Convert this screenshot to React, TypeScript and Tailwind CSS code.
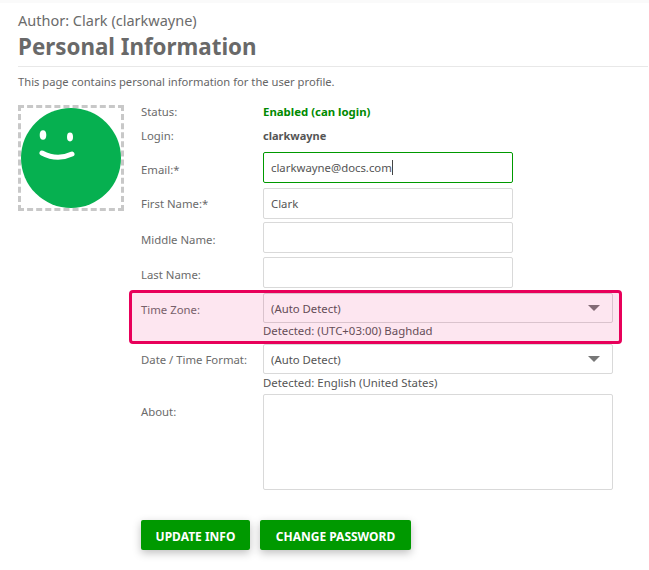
const labelClass = "w-[122px] shrink-0 text-[11.35px] text-[#6b6b6b]";
const boxClass = "rounded-[2px] border bg-white px-[7px] text-[11.35px] leading-[29px] text-[#555]";
const inputClass = `h-[31px] border-[#d9d9d9] ${boxClass}`;
const detectedClass = "ml-[122px] text-[11.4px] leading-[16px] text-[#555]";

function Field({ label, value, mt, labelPad }: { label: string; value?: string; mt: string; labelPad: string }) {
  return (
    <div className={`flex items-center ${mt}`}>
      <div className={`${labelClass} ${labelPad}`}>{label}</div>
      <div className={`${inputClass} w-[250px]`}>{value}</div>
    </div>
  );
}

function SelectBox({ value }: { value: string }) {
  return (
    <div className={`h-[30px] border-[#d9d9d9] ${boxClass} flex w-[350px] items-center justify-between pr-[12px]`}>
      <span>{value}</span>
      <span className="h-0 w-0 border-x-[6px] border-t-[6px] border-x-transparent border-t-[#777]" />
    </div>
  );
}

function Avatar() {
  return (
    <div className="mt-[5px] h-[106px] w-[106px] shrink-0 border-[3px] border-dashed border-[#c8c8c8]">
      <svg viewBox="0 0 100 100" className="h-[100px] w-[100px]">
        <circle cx="50" cy="50" r="50" fill="#06b050" />
        <ellipse cx="22" cy="27" rx="3.3" ry="4.8" fill="#fff" />
        <ellipse cx="49" cy="29" rx="3" ry="4.4" fill="#fff" />
        <path d="M21 45 Q36 53 51 46" fill="none" stroke="#fff" strokeWidth="5" strokeLinecap="round" />
      </svg>
    </div>
  );
}

export default function App() {
  return (
    <div className="h-[570px] w-[649px] overflow-hidden bg-white font-['Noto_Sans',sans-serif]">
      <div className="h-[3px] bg-[#fafafa]" />
      <div className="pl-[18px] pr-[1px]">
        <div className="mt-[7px] text-[14.5px] leading-[20px] text-[#6b6b6b]">Author: Clark (clarkwayne)</div>
        <h1 className="mt-[1px] text-[22.35px] font-bold leading-[32px] text-[#696969]">Personal Information</h1>
        <div className="mt-[3px] border-b border-[#e8e8e8]" />
        <p className="mt-[6px] text-[11.2px] leading-[17px] text-[#666]">
          This page contains personal information for the user profile.
        </p>
        <div className="mt-[10px] flex">
          <Avatar />
          <div className="ml-[17px]">
            <div className="flex h-[24px] items-center">
              <div className={labelClass}>Status:</div>
              <div className="text-[11.4px] font-bold text-[#008a00]">Enabled (can login)</div>
            </div>
            <div className="flex h-[24px] items-center">
              <div className={labelClass}>Login:</div>
              <div className="text-[11px] font-bold text-[#555]">clarkwayne</div>
            </div>
            <div className="mt-[4px] flex items-center">
              <div className={`${labelClass} pt-[4px]`}>Email:*</div>
              <div className={`h-[31px] border-[#009900] ${boxClass} flex w-[250px] items-center`}>
                clarkwayne@docs.com
                <span className="h-[15px] w-px bg-[#444]" />
              </div>
            </div>
            <Field label="First Name:*" value="Clark" mt="mt-[5px]" labelPad="pt-0" />
            <Field label="Middle Name:" mt="mt-[3px]" labelPad="pt-[4px]" />
            <Field label="Last Name:" mt="mt-[4px]" labelPad="pt-[4px]" />
            <div className="relative mt-[5px]">
              <div className="flex items-center">
                <div className={`${labelClass} pt-[4px]`}>Time Zone:</div>
                <SelectBox value="(Auto Detect)" />
              </div>
              <div className={detectedClass}>Detected: (UTC+03:00) Baghdad</div>
              <div className="pointer-events-none absolute left-[-12px] top-[-3px] h-[54px] w-[493px] rounded-[4px] border-[3px] border-[#e8005a] bg-[#f0056a]/10" />
            </div>
            <div className="mt-[5px] flex items-center">
              <div className={`${labelClass} pt-[2px]`}>Date / Time Format:</div>
              <SelectBox value="(Auto Detect)" />
            </div>
            <div className={`${detectedClass} mt-[1px]`}>Detected: English (United States)</div>
            <div className="mt-[3px] flex">
              <div className={`${labelClass} pt-[9px]`}>About:</div>
              <div className="h-[96px] w-[350px] rounded-[2px] border border-[#d9d9d9]" />
            </div>
            <div className="mt-[30px] flex gap-[10px] text-[12px] font-bold text-white">
              <button className="h-[30px] w-[109px] rounded-[2px] bg-[#009900] pt-[3px] shadow-[0_3px_8px_rgba(0,0,0,0.25)]">UPDATE INFO</button>
              <button className="h-[30px] w-[151px] rounded-[2px] bg-[#009900] pt-[3px] shadow-[0_3px_8px_rgba(0,0,0,0.25)]">CHANGE PASSWORD</button>
            </div>
          </div>
        </div>
      </div>
    </div>
  );
}
